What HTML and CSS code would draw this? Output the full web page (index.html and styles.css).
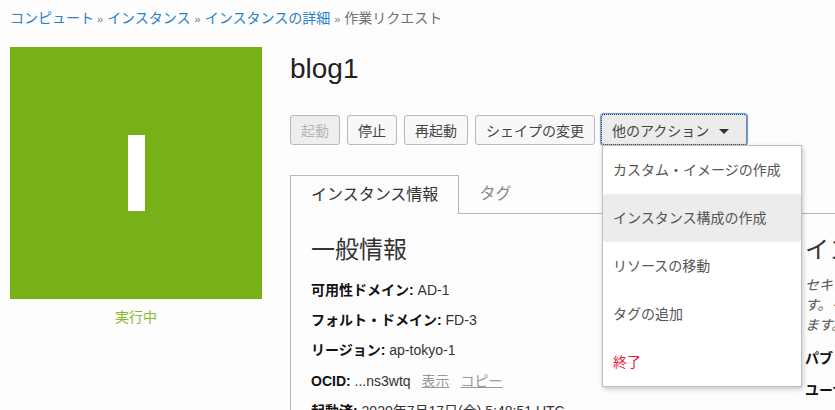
FILE: index.html
```html
<!DOCTYPE html>
<html lang="ja">
<head>
<meta charset="utf-8">
<title>作業リクエスト</title>
<link rel="stylesheet" href="styles.css">
</head>
<body>
<nav class="crumbs"><a>コンピュート</a><span class="sep">»</span><a>インスタンス</a><span class="sep">»</span><a>インスタンスの詳細</a><span class="sep">»</span><span>作業リクエスト</span></nav>
<div class="page">
  <aside class="side">
    <div class="tile"><div class="bar"></div></div>
    <div class="state">実行中</div>
  </aside>
  <main class="main">
    <h1 class="title">blog1</h1>
    <div class="actions">
      <button class="btn disabled">起動</button>
      <button class="btn">停止</button>
      <button class="btn">再起動</button>
      <button class="btn">シェイプの変更</button>
      <div class="more">
        <button class="btn open">他のアクション<span class="caret"></span></button>
        <ul class="menu">
          <li>カスタム・イメージの作成</li>
          <li class="hover">インスタンス構成の作成</li>
          <li>リソースの移動</li>
          <li>タグの追加</li>
          <li class="danger">終了</li>
        </ul>
      </div>
    </div>
    <div class="tabs">
      <div class="tab active">インスタンス情報</div>
      <div class="tab">タグ</div>
    </div>
    <div class="panel">
      <section class="col-a">
        <h2 class="head">一般情報</h2>
        <p class="row"><b>可用性ドメイン:</b> AD-1</p>
        <p class="row"><b>フォルト・ドメイン:</b> FD-3</p>
        <p class="row"><b>リージョン:</b> ap-tokyo-1</p>
        <p class="row ocid"><b>OCID:</b> ...ns3wtq <a class="link first">表示</a><a class="link">コピー</a></p>
        <p class="row"><b>起動済:</b> 2020年7月17日(金) 5:48:51 UTC</p>
      </section>
      <section class="col-b">
        <h2 class="head">インスタンス・アクセス</h2>
        <p class="note">セキュア・シェルを使用してインスタンスに接続しま<br>す。インスタンスへの接続方法を確認し<br>ます。</p>
        <p class="row ip"><b>パブリックIPアドレス:</b></p>
        <p class="row"><b>ユーザー名:</b> opc</p>
      </section>
    </div>
  </main>
</div>
</body>
</html>
```
FILE: styles.css
```css
html, body {
  margin: 0;
  padding: 0;
  height: 410px;
  overflow: hidden;
  background: #fdfdfd;
  font-family: "Liberation Sans", "Noto Sans CJK JP", sans-serif;
  font-size: 14px;
  color: #222;
}
.crumbs {
  padding: 8px 10px 0;
  height: 47px;
  box-sizing: border-box;
  font-size: 14px;
  line-height: 20px;
  color: #6f6f6f;
  white-space: nowrap;
}
.crumbs a { color: #2a80c8; }
.sep { margin: 0 4px; font-size: 11px; color: #777; }
.sep:first-of-type { margin-left: 3px; }
.page {
  display: flex;
  padding-left: 10px;
}
.side { width: 252px; flex: none; }
.tile {
  height: 252px;
  background: #78b117;
  display: flex;
  justify-content: center;
  align-items: center;
}
.bar { width: 17px; height: 76px; background: #fff; }
.state {
  margin-top: 9px;
  text-align: center;
  font-size: 14px;
  line-height: 18px;
  color: #85bb2e;
}
.main { margin-left: 28px; width: 545px; flex: none; }
.title {
  margin: 0;
  padding-top: 5px;
  font-size: 28px;
  font-weight: 400;
  line-height: 34px;
  color: #222;
}
.actions {
  display: flex;
  gap: 7px;
  margin-top: 29px;
  align-items: flex-start;
}
.btn {
  height: 30px;
  padding: 0 10px;
  box-sizing: border-box;
  border: 1px solid #b3b8c0;
  border-radius: 3px;
  background: #f8f8f8;
  color: #444;
  font: inherit;
  font-size: 14px;
  white-space: nowrap;
}
.disabled { background: #eee; color: #b5b5b5; }
.more { position: relative; }
.open {
  width: 146px;
  height: 31px;
  margin: -1px 0 0 -1px;
  padding: 0 0 0 10px;
  text-align: left;
  background: #ececec;
  border: 1px dotted #222;
  border-radius: 3px;
  box-shadow: 0 0 1px 1px #5b9ae6;
  color: #444;
}
.caret {
  display: inline-block;
  margin-left: 10px;
  vertical-align: 2px;
  border-left: 5px solid transparent;
  border-right: 5px solid transparent;
  border-top: 5px solid #333;
}
.menu {
  position: absolute;
  z-index: 2;
  top: 30px;
  left: 0;
  width: 200px;
  height: 242px;
  margin: 0;
  padding: 0;
  box-sizing: border-box;
  list-style: none;
  background: #fff;
  border: 1px solid #b9c0cc;
  box-shadow: 1px 2px 5px rgba(0, 0, 0, .22);
}
.menu li {
  height: 48px;
  padding-left: 10px;
  line-height: 48px;
  color: #555;
  font-size: 14px;
  white-space: nowrap;
}
.menu .hover { background: #ececec; border-radius: 3px; }
.menu .danger { color: #e8173c; }
.tabs {
  display: flex;
  margin-top: 30px;
  height: 39px;
  box-sizing: border-box;
  border-bottom: 1px solid #b3b8c0;
}
.tab {
  height: 39px;
  box-sizing: border-box;
  padding: 0 20px;
  font-size: 16px;
  line-height: 38px;
  color: #888;
}
.active {
  background: #fdfdfd;
  border: 1px solid #b3b8c0;
  border-bottom: 0;
  color: #333;
}
.panel {
  display: flex;
  border-left: 1px solid #b3b8c0;
  padding: 19px 0 0 20px;
  height: 300px;
  box-sizing: border-box;
}
.col-a { width: 494px; flex: none; }
.col-b { width: 300px; flex: none; }
.head {
  margin: 0 0 13px;
  font-size: 24px;
  font-weight: 400;
  line-height: 34px;
  color: #333;
  white-space: nowrap;
}
.row {
  margin: 0 0 10px;
  font-size: 14px;
  line-height: 20px;
  color: #333;
  white-space: nowrap;
}
.row b { color: #111; }
.ocid { margin-top: 11px; }
.ip { margin-bottom: 12px; }
.link {
  margin-left: 11px;
  color: #999;
  text-decoration: underline;
}
.link.first { margin-left: 7px; }
.note {
  margin: -5px 0 13px;
  font-size: 14px;
  font-style: italic;
  line-height: 20px;
  color: #555;
  white-space: nowrap;
}
```
